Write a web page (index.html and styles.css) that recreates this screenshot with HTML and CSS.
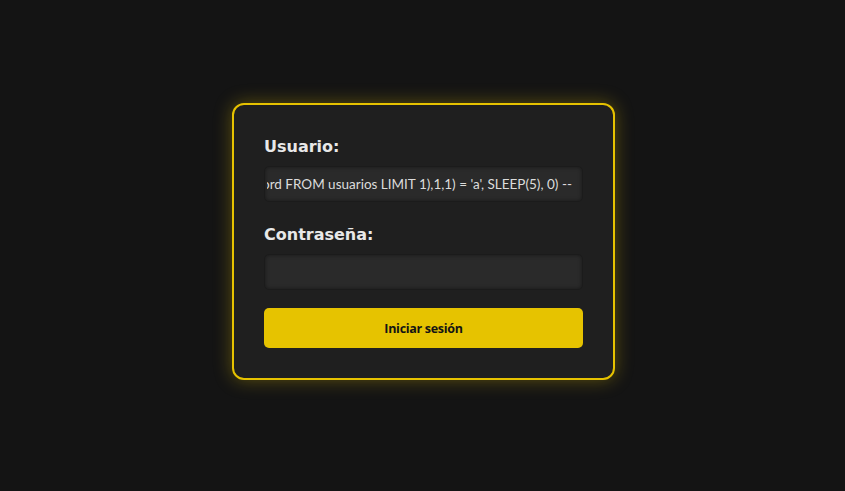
FILE: index.html
```html
<!DOCTYPE html>
<html lang="es">
<head>
<meta charset="utf-8">
<title>Login</title>
<link rel="stylesheet" href="styles.css">
</head>
<body>
<main class="page">
  <form class="card" onsubmit="return false">
    <label class="label" for="usuario">Usuario:</label>
    <div class="field field-scrolled">
      <input class="field-input" id="usuario" type="text" value="' OR IF(SUBSTRING((SELECT password FROM usuarios LIMIT 1),1,1) = 'a', SLEEP(5), 0) --">
    </div>
    <label class="label" for="pass">Contraseña:</label>
    <div class="field">
      <input class="field-input" id="pass" type="password">
    </div>
    <button class="btn" type="submit">Iniciar sesión</button>
  </form>
</main>
<script src="script.js"></script>
</body>
</html>
```
FILE: styles.css
```css
* { box-sizing: border-box; }
html, body { margin: 0; height: 100%; }
body {
  background: #141414;
  font-family: "DejaVu Sans", sans-serif;
}
.page {
  height: 100%;
  display: flex;
  justify-content: center;
  align-items: flex-start;
  padding: 103px 0 0 2px;
}
.card {
  width: 383px;
  background: #1f1f1f;
  border: 2px solid #e6c200;
  border-radius: 12px;
  box-shadow: 0 0 18px rgba(230, 194, 0, 0.35);
  padding: 32px 30px 30px;
  display: flex;
  flex-direction: column;
}
.label {
  color: #e8e8e8;
  font-weight: bold;
  font-size: 16px;
  line-height: 20px;
  margin-bottom: 9px;
}
.field {
  height: 36px;
  width: 100%;
  background: #2a2a2a;
  border: 1px solid #1b1b1b;
  border-radius: 5px;
  box-shadow: inset 0 0 4px rgba(0, 0, 0, 0.45);
  padding: 0 10px;
  margin-bottom: 23px;
  display: flex;
}
.field-scrolled { padding: 0 10px 0 2px; }
.field-input {
  flex: 1;
  min-width: 0;
  height: 100%;
  border: none;
  background: transparent;
  padding: 0;
  margin: 0;
  color: #dcdcdc;
  font-family: "Lato", "Open Sans", sans-serif;
  font-size: 13.5px;
  outline: none;
}
.btn {
  margin-top: -5px;
  height: 40px;
  width: 100%;
  background: #e6c300;
  border: none;
  border-radius: 5px;
  color: #141414;
  font-family: "Open Sans", sans-serif;
  font-weight: bold;
  font-size: 12.5px;
  letter-spacing: -0.3px;
  cursor: pointer;
}
```
FILE: script.js
```js
var u = document.getElementById('usuario');
u.scrollLeft = u.scrollWidth;
```
